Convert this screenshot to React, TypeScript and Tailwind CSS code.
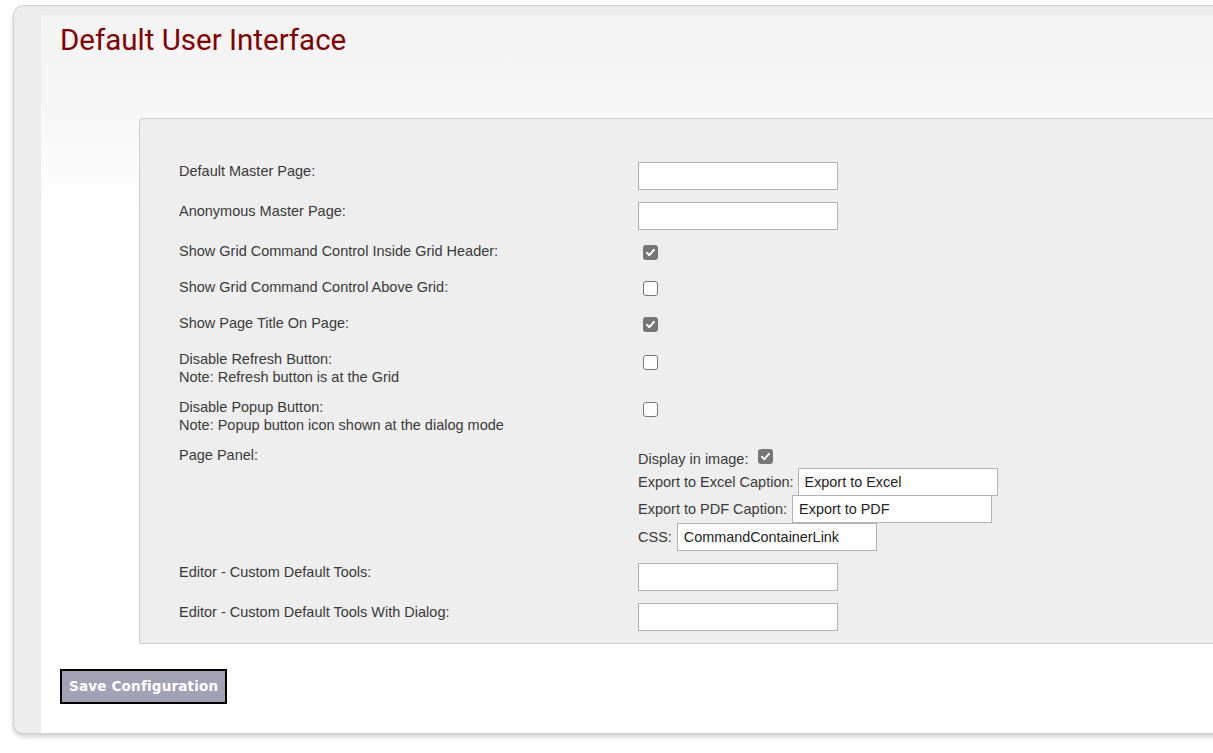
import React from "react";

function Check({ checked, className = "" }: { checked?: boolean; className?: string }) {
  if (checked) {
    return (
      <div
        className={`flex h-[15px] w-[15px] items-center justify-center rounded-[3px] bg-[#767676] ${className}`}
      >
        <svg viewBox="0 0 12 12" className="h-[11px] w-[11px]">
          <path d="M2.2 6.4 L4.8 8.9 L9.8 3.2" fill="none" stroke="#fff" strokeWidth="2.2" strokeLinecap="round" strokeLinejoin="round" />
        </svg>
      </div>
    );
  }
  return (
    <div
      className={`h-[15px] w-[15px] rounded-[3px] border-[1.5px] border-[#767676] bg-white ${className}`}
    />
  );
}

function TextBox({ value = "", className = "" }: { value?: string; className?: string }) {
  return (
    <input
      readOnly
      value={value}
      className={`h-[28px] w-[200px] border border-[#b3b3b3] bg-white px-[6px] text-[14.4px] text-[#222] outline-none ${className}`}
    />
  );
}

const label = "text-[14.5px] leading-[18px] text-[#3a3a3a]";

export default function App() {
  return (
    <div className="min-h-screen overflow-hidden bg-white pl-[13px] pt-[5px] font-['Liberation_Sans',Arial,sans-serif]">
      <div className="h-[729px] w-[1230px] rounded-l-[10px] border border-r-0 border-[#d2d2d2] bg-[#ececec] pl-[27px] pt-[9px] shadow-[0_3px_4px_rgba(0,0,0,0.18)]">
        <div className="flex h-full flex-col bg-[linear-gradient(to_bottom,#f3f3f3_0px,#f7f7f7_100px,#ffffff_200px)]">
          <h1 className="pl-[19px] pt-[7px] font-['Roboto',sans-serif] text-[29.5px] leading-[36px] text-[#800000]">
            Default User Interface
          </h1>

          <div className="ml-[98px] mt-[60px] rounded-tl-[4px] border border-r-0 border-[#cfcfcf] bg-[#eeeeee] pb-[12px] pl-[39px] pt-[43px]">
            <div className="grid grid-cols-[459px_1fr] gap-y-[12px]">
              <div className={label}>Default Master Page:</div>
              <div>
                <TextBox />
              </div>

              <div className={label}>Anonymous Master Page:</div>
              <div>
                <TextBox />
              </div>

              <div className={label}>Show Grid Command Control Inside Grid Header:</div>
              <div className="h-[24px] pl-[5px] pt-[3px]">
                <Check checked />
              </div>

              <div className={label}>Show Grid Command Control Above Grid:</div>
              <div className="h-[24px] pl-[5px] pt-[3px]">
                <Check />
              </div>

              <div className={label}>Show Page Title On Page:</div>
              <div className="h-[24px] pl-[5px] pt-[3px]">
                <Check checked />
              </div>

              <div className={label}>
                Disable Refresh Button:
                <br />
                Note: Refresh button is at the Grid
              </div>
              <div className="pl-[5px] pt-[5px]">
                <Check />
              </div>

              <div className={label}>
                Disable Popup Button:
                <br />
                Note: Popup button icon shown at the dialog mode
              </div>
              <div className="pl-[5px] pt-[4px]">
                <Check />
              </div>

              <div className={label}>Page Panel:</div>
              <div className="flex flex-col pt-[3px]">
                <div className={`flex h-[19px] items-center ${label}`}>
                  <span>Display in image:</span>
                  <Check checked className="ml-[10px] -mt-[4px]" />
                </div>
                <div className={`flex items-center ${label}`}>
                  <span>Export to Excel Caption:</span>
                  <TextBox value="Export to Excel" className="ml-[4px] h-[27px]" />
                </div>
                <div className={`-mt-[1px] flex items-center ${label}`}>
                  <span>Export to PDF Caption:</span>
                  <TextBox value="Export to PDF" className="ml-[5px] h-[27px]" />
                </div>
                <div className={`flex items-center ${label}`}>
                  <span>CSS:</span>
                  <TextBox value="CommandContainerLink" className="ml-[5px] h-[26px]" />
                </div>
              </div>

              <div className={label}>Editor - Custom Default Tools:</div>
              <div>
                <TextBox />
              </div>

              <div className={label}>Editor - Custom Default Tools With Dialog:</div>
              <div>
                <TextBox />
              </div>
            </div>
          </div>

          <div className="pl-[19px] pt-[25px]">
            <button className="h-[35px] border-2 border-black bg-[#a2a2b6] px-[7px] font-['DejaVu_Sans',Verdana,sans-serif] text-[13.5px] font-bold tracking-[0.2px] text-white">
              Save Configuration
            </button>
          </div>
        </div>
      </div>
    </div>
  );
}
